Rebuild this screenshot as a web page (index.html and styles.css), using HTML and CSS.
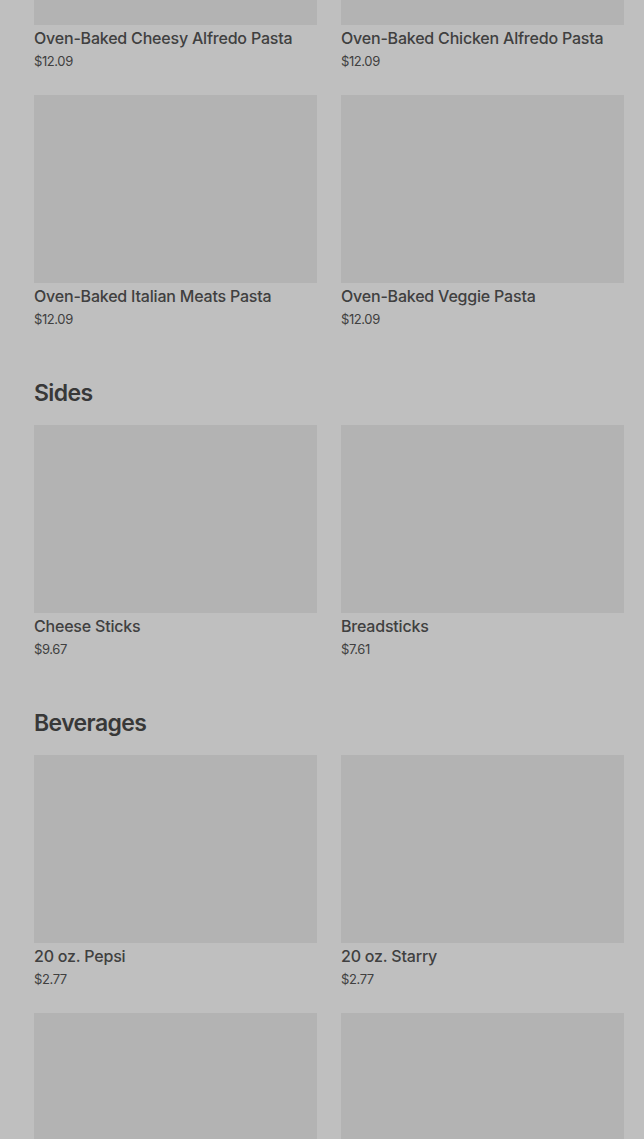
FILE: index.html
```html
<!DOCTYPE html>
<html lang="en">
<head>
    <meta charset="UTF-8">
    <meta name="viewport" content="width=device-width, initial-scale=1.0">
    <title>Menu</title>
    <link rel="stylesheet" href="styles.css">
</head>
<body>

    <div class="menu">
        <section class="category first">
            <div class="grid">
                <div class="item">
                    <div class="photo"></div>
                    <div class="name">Oven-Baked Cheesy Alfredo Pasta</div>
                    <div class="price">$12.09</div>
                </div>
                <div class="item">
                    <div class="photo"></div>
                    <div class="name">Oven-Baked Chicken Alfredo Pasta</div>
                    <div class="price">$12.09</div>
                </div>
                <div class="item">
                    <div class="photo"></div>
                    <div class="name">Oven-Baked Italian Meats Pasta</div>
                    <div class="price">$12.09</div>
                </div>
                <div class="item">
                    <div class="photo"></div>
                    <div class="name">Oven-Baked Veggie Pasta</div>
                    <div class="price">$12.09</div>
                </div>
            </div>
        </section>

        <section class="category">
            <h2>Sides</h2>
            <div class="grid">
                <div class="item">
                    <div class="photo"></div>
                    <div class="name">Cheese Sticks</div>
                    <div class="price">$9.67</div>
                </div>
                <div class="item">
                    <div class="photo"></div>
                    <div class="name">Breadsticks</div>
                    <div class="price">$7.61</div>
                </div>
            </div>
        </section>

        <section class="category">
            <h2>Beverages</h2>
            <div class="grid">
                <div class="item">
                    <div class="photo"></div>
                    <div class="name">20 oz. Pepsi</div>
                    <div class="price">$2.77</div>
                </div>
                <div class="item">
                    <div class="photo"></div>
                    <div class="name">20 oz. Starry</div>
                    <div class="price">$2.77</div>
                </div>
                <!-- next row is below the fold, only the photos show -->
                <div class="item">
                    <div class="photo"></div>
                </div>
                <div class="item">
                    <div class="photo"></div>
                </div>
            </div>
        </section>
    </div>

</body>
</html>
```

FILE: styles.css
```css
html, body { height: 100%; }
body {
    margin: 0; overflow: hidden; background: #bfbfbf; color: #404040;
    font-family: Inter, "Noto Sans", Arial, sans-serif;
}
.menu { padding: 0 20px 0 34px; margin-top: -163px; }
.category { margin-top: 49px; }
.category.first { margin-top: 0; }
.category h2 {
    margin: 0 0 16px; font-size: 23px; line-height: 32px; font-weight: 600;
    letter-spacing: -0.6px; color: #383838;
}
.grid { display: grid; grid-template-columns: 283px 283px; column-gap: 24px; row-gap: 25px; }
.photo { height: 188px; background: #b3b3b3; }
.name {
    margin-top: 2px; font-size: 16px; line-height: 22px; font-weight: 500;
    letter-spacing: -0.2px; white-space: nowrap;
}
.price { margin-top: 3px; font-size: 13px; line-height: 18px; letter-spacing: -0.4px; }
```
